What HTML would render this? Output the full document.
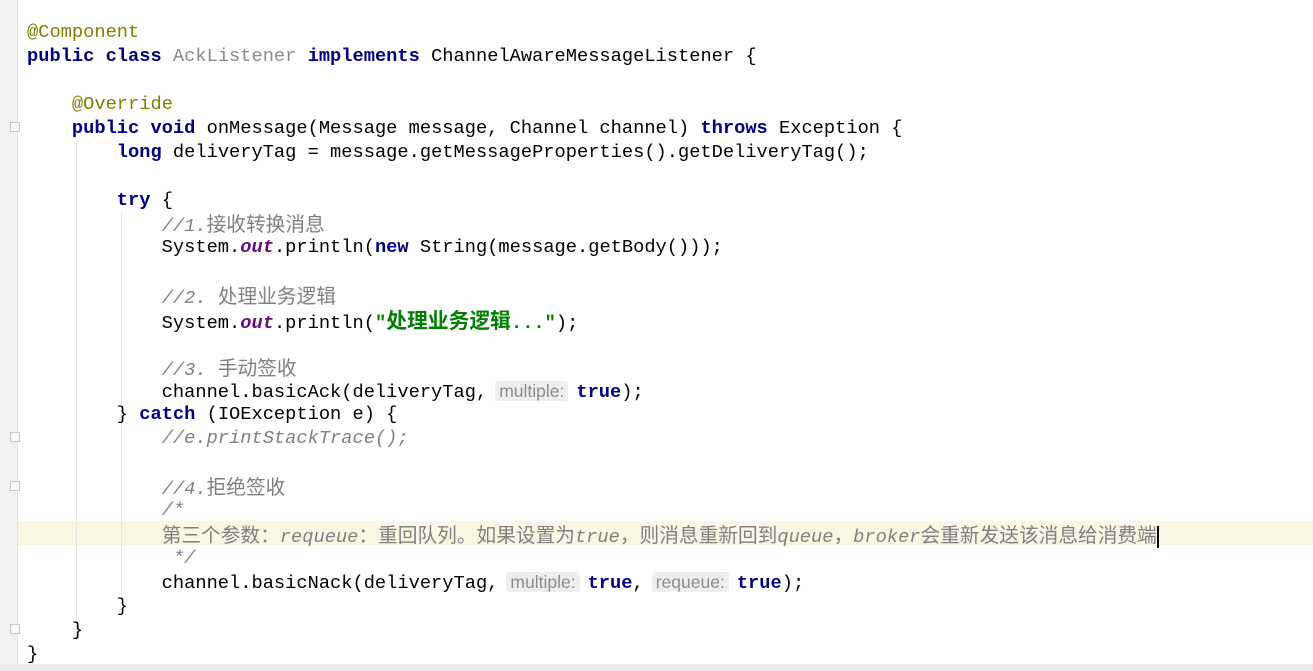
<!DOCTYPE html>
<html><head><meta charset="utf-8"><style>
html,body{margin:0;padding:0;width:1313px;height:671px;overflow:hidden;background:#fff;}
.gut{position:absolute;left:0;top:0;width:17px;height:665px;background:#f2f2f2;border-right:1px solid #e2e2e2;}
.bot{position:absolute;left:0;top:664px;width:1313px;height:7px;background:#ececec;}
.hl{position:absolute;left:18px;top:521px;width:1295px;height:24px;background:#fcf6e4;}
.l{position:absolute;left:27px;height:24px;line-height:24px;white-space:pre;font-family:"Liberation Mono","Noto Sans CJK SC",monospace;font-size:18.72px;color:#000;}
.k{color:#000080;font-weight:bold;}
.a{color:#808000;}
.g{color:#8a8a8a;}
.c{color:#808080;font-style:italic;}
.cz{color:#808080;font-family:"Noto Sans CJK SC",sans-serif;font-style:normal;font-size:19.7px;}
.sz{font-family:"Noto Sans CJK SC",sans-serif;font-size:20.8px;}
.o{color:#660e7a;font-style:italic;font-weight:bold;}
.s{color:#008000;font-weight:bold;}
.h{font-family:"Liberation Sans",sans-serif;font-size:17.5px;color:#8c8c8c;background:#eeeeee;border-radius:3px;padding:0 4px;margin:0 8px 0 8px;}
.ind{position:absolute;width:1px;background:#e6e6e6;}
.fold{position:absolute;left:10px;width:10px;height:10px;border:1px solid #c8c8c8;background:#fafafa;box-sizing:border-box;}
</style></head><body>
<div class="gut"></div><div class="bot"></div><div class="hl"></div>
<div class="ind" style="left:76px;top:140px;height:500px"></div>
<div class="ind" style="left:121px;top:212px;height:380px"></div>
<div class="fold" style="top:122px"></div>
<div class="fold" style="top:432px"></div>
<div class="fold" style="top:481px"></div>
<div class="fold" style="top:624px"></div>
<div class="l" style="top:20px"><span class="a">@Component</span></div>
<div class="l" style="top:44px"><span class="k">public class </span><span class="g">AckListener </span><span class="k">implements </span>ChannelAwareMessageListener {</div>
<div class="l" style="top:92px">    <span class="a">@Override</span></div>
<div class="l" style="top:116px">    <span class="k">public void </span>onMessage(Message message, Channel channel) <span class="k">throws </span>Exception {</div>
<div class="l" style="top:140px">        <span class="k">long </span>deliveryTag = message.getMessageProperties().getDeliveryTag();</div>
<div class="l" style="top:188px">        <span class="k">try </span>{</div>
<div class="l" style="top:211px">            <span class="c">//1.<span class="cz">接收转换消息</span></span></div>
<div class="l" style="top:235px">            System.<span class="o">out</span>.println(<span class="k">new </span>String(message.getBody()));</div>
<div class="l" style="top:283px">            <span class="c">//2. <span class="cz">处理业务逻辑</span></span></div>
<div class="l" style="top:307px">            System.<span class="o">out</span>.println(<span class="s">"<span class="sz">处理业务逻辑</span>..."</span>);</div>
<div class="l" style="top:355px">            <span class="c">//3. <span class="cz">手动签收</span></span></div>
<div class="l" style="top:379px">            channel.basicAck(deliveryTag,<span class="h">multiple:</span><span class="k">true</span>);</div>
<div class="l" style="top:402px">        } <span class="k">catch </span>(IOException e) {</div>
<div class="l" style="top:426px">            <span class="c">//e.printStackTrace();</span></div>
<div class="l" style="top:474px">            <span class="c">//4.<span class="cz">拒绝签收</span></span></div>
<div class="l" style="top:498px">            <span class="c">/*</span></div>
<div class="l" style="top:522px">            <span class="c"><span class="cz">第三个参数：</span>requeue<span class="cz">：重回队列。如果设置为</span>true<span class="cz">，则消息重新回到</span>queue<span class="cz">，</span>broker<span class="cz">会重新发送该消息给消费端</span></span><span style="border-left:2px solid #000;"></span></div>
<div class="l" style="top:546px">             <span class="c">*/</span></div>
<div class="l" style="top:570px">            channel.basicNack(deliveryTag,<span class="h">multiple:</span><span class="k">true</span>,<span class="h">requeue:</span><span class="k">true</span>);</div>
<div class="l" style="top:594px">        }</div>
<div class="l" style="top:618px">    }</div>
<div class="l" style="top:642px">}</div>
</body></html>
